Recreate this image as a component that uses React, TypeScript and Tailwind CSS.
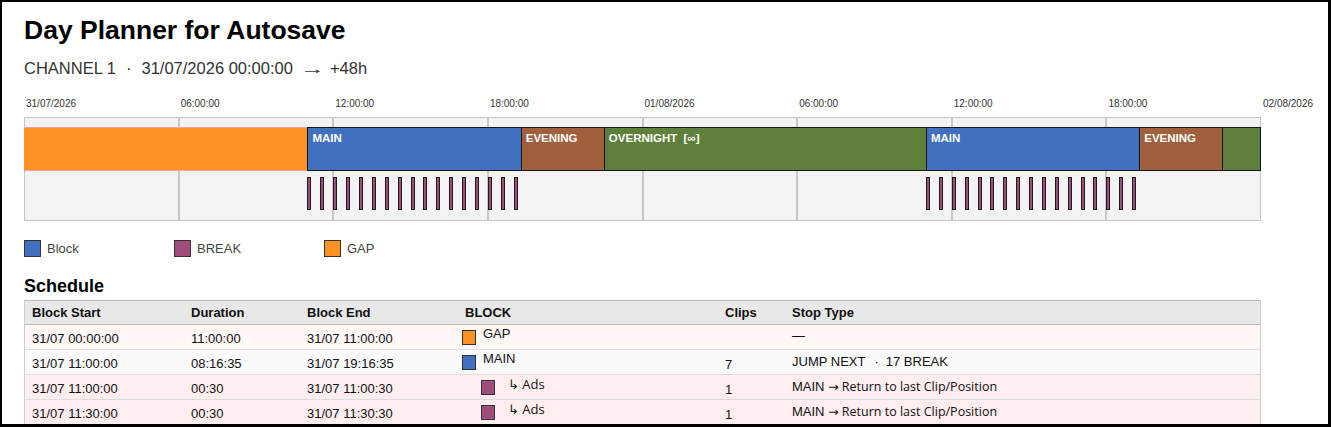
import React from 'react';

const HOUR = 1237 / 48;
const px = (h: number) => h * HOUR;

type Kind = 'gap' | 'main' | 'evening' | 'overnight';

const blocks: { start: number; end: number; label: string; kind: Kind }[] = [
  { start: 0, end: 11, label: '', kind: 'gap' },
  { start: 11, end: 19.2764, label: 'MAIN', kind: 'main' },
  { start: 19.2764, end: 22.5, label: 'EVENING', kind: 'evening' },
  { start: 22.5, end: 35, label: 'OVERNIGHT  [∞]', kind: 'overnight' },
  { start: 35, end: 43.2764, label: 'MAIN', kind: 'main' },
  { start: 43.2764, end: 46.5, label: 'EVENING', kind: 'evening' },
  { start: 46.5, end: 48, label: '', kind: 'overnight' },
];

const blockClass: Record<Kind, string> = {
  gap: 'bg-[#ff9222] border-y border-[#eaa6a6]',
  main: 'bg-[#4170c0] border border-[#151515]',
  evening: 'bg-[#a0603d] border border-[#151515]',
  overnight: 'bg-[#5f7f3c] border border-[#151515]',
};

const swatchClass: Record<string, string> = {
  gap: 'bg-[#ff9222]',
  main: 'bg-[#4170c0]',
  brk: 'bg-[#a04d7e]',
};

const ticks = [0, 6, 12, 18, 24, 30, 36, 42, 48];
const tickLabel = (h: number) =>
  h === 0 ? '31/07/2026' : h === 24 ? '01/08/2026' : h === 48 ? '02/08/2026' : `${String(h % 24).padStart(2, '0')}:00:00`;

// 17 breaks every 30 min inside each MAIN block
const breaks: number[] = [];
blocks
  .filter((b) => b.kind === 'main')
  .forEach((b) => {
    for (let i = 0; i < 17; i++) breaks.push(b.start + i * 0.5);
  });

const rows = [
  { start: '31/07 00:00:00', dur: '11:00:00', end: '31/07 11:00:00', kind: 'gap', name: 'GAP', clips: '', stop: 'dash', bg: 'bg-[#fff6f6]' },
  { start: '31/07 11:00:00', dur: '08:16:35', end: '31/07 19:16:35', kind: 'main', name: 'MAIN', clips: '7', stop: 'jump', bg: 'bg-[#fafafa]' },
  { start: '31/07 11:00:00', dur: '00:30', end: '31/07 11:00:30', kind: 'brk', name: 'Ads', clips: '1', stop: 'return', bg: 'bg-[#ffeef0]' },
  { start: '31/07 11:30:00', dur: '00:30', end: '31/07 11:30:30', kind: 'brk', name: 'Ads', clips: '1', stop: 'return', bg: 'bg-[#ffeef0]' },
  { start: '31/07 12:00:00', dur: '00:30', end: '31/07 12:00:30', kind: 'brk', name: 'Ads', clips: '1', stop: 'return', bg: 'bg-[#ffeef0]' },
  { start: '31/07 12:30:00', dur: '00:30', end: '31/07 12:30:30', kind: 'brk', name: 'Ads', clips: '1', stop: 'return', bg: 'bg-[#ffeef0]' },
];

const cols = 'grid grid-cols-[159px_116px_158px_260px_67px_1fr]';

const Timeline = () => (
  <div>
    {/* axis labels */}
    <div className="relative h-[20px] w-[1237px] text-[10px] leading-[12px] text-[#333]">
      {ticks.map((h) => (
        <span key={h} className="absolute top-[1px] whitespace-nowrap" style={{ left: px(h) + 2 }}>
          {tickLabel(h)}
        </span>
      ))}
    </div>

    <div className="relative h-[104px] w-[1237px] border border-[#c6c6c6] bg-[#f3f3f3]">
      {ticks.slice(1, -1).map((h) => (
        <div key={h} className="absolute top-0 bottom-0 w-[2px] bg-[#c8c8c8]" style={{ left: px(h) - 2 }} />
      ))}

      {/* blocks */}
      {blocks.map((b, i) => (
        <div
          key={i}
          className={`absolute top-[9px] h-[44px] overflow-hidden whitespace-pre px-[4px] pt-[4px] text-[11.5px] font-bold leading-[13px] text-white ${blockClass[b.kind]}`}
          style={{ left: px(b.start) - 1, width: px(b.end) - px(b.start) + (b.end === 48 ? 0 : 1) }}
        >
          {b.label}
        </div>
      ))}

      {/* breaks */}
      {breaks.map((t, i) => (
        <div
          key={i}
          className="absolute top-[59px] h-[33px] w-[4px] border border-[#1a1a1a] bg-[#a04d7e]"
          style={{ left: px(t) - 1 }}
        />
      ))}
    </div>
  </div>
);

const Legend = () => (
  <div className="mt-[19px] flex text-[13px] leading-[17px] text-[#444]">
    {[
      { label: 'Block', cls: 'bg-[#4170c0]' },
      { label: 'BREAK', cls: 'bg-[#a04d7e]' },
      { label: 'GAP', cls: 'bg-[#ff9222]' },
    ].map((l) => (
      <div key={l.label} className="flex w-[150px] items-center gap-[6px]">
        <span className={`h-[17px] w-[17px] border border-[#333] ${l.cls}`} />
        <span>{l.label}</span>
      </div>
    ))}
  </div>
);

const StopType = ({ stop }: { stop: string }) => {
  if (stop === 'dash') return <span>—</span>;
  if (stop === 'jump')
    return (
      <span>
        JUMP NEXT<span className="ml-[9px] mr-[7px]">·</span>17 BREAK
      </span>
    );
  return (
    <span>
      MAIN{' '}
      <span className="font-['Open_Sans','DejaVu_Sans',sans-serif] text-[12.5px]">→ Return to last Clip/Position</span>
    </span>
  );
};

const Schedule = () => (
  <div>
    <h2 className="mt-[19px] text-[18px] font-bold leading-[21px] text-black">Schedule</h2>
    <div className="mt-[3px] w-[1237px] border-x border-[#cfcfcf] text-[13px] leading-[15px] text-[#111]">
      <div className={`${cols} h-[25px] border-y border-[#b9b9b9] bg-[#e8e8e8] font-bold`}>
        {['Block Start', 'Duration', 'Block End', 'BLOCK', 'Clips', 'Stop Type'].map((h) => (
          <div key={h} className="px-[7px] pt-[4px]">
            {h}
          </div>
        ))}
      </div>
      {rows.map((r, i) => (
        <div key={i} className={`${cols} h-[25px] border-b border-[#dddddd] ${r.bg}`}>
          <div className="px-[7px] pt-[6px]">{r.start}</div>
          <div className="px-[7px] pt-[6px]">{r.dur}</div>
          <div className="px-[7px] pt-[6px]">{r.end}</div>
          <div className={`flex items-start ${r.kind === 'brk' ? 'pl-[23px]' : 'pl-[4px]'}`}>
            <span className={`mt-[5px] h-[15px] w-[14px] shrink-0 border border-[#333] ${swatchClass[r.kind]}`} />
            {r.kind === 'brk' ? (
              <span className="ml-[13px] mt-[1px] font-['Open_Sans','DejaVu_Sans',sans-serif] text-[13px] leading-[17px]">
                ↳ Ads
              </span>
            ) : (
              <span className="ml-[7px] mt-[1px]">{r.name}</span>
            )}
          </div>
          <div className="px-[7px] pt-[7px]">{r.clips}</div>
          <div className={`px-[7px] ${r.kind === 'gap' ? 'pt-[3px]' : 'pt-[4px]'}`}>
            <StopType stop={r.stop} />
          </div>
        </div>
      ))}
    </div>
  </div>
);

export default function App() {
  return (
    <div className="h-[427px] w-[1331px] overflow-hidden border-t-2 border-l-2 border-r-[3px] border-b-[3px] border-black bg-white font-['Liberation_Sans',Arial,sans-serif]">
      <div className="pl-[22px] pt-[13px]">
        <h1 className="text-[26.5px] font-bold leading-[30px] text-black">Day Planner for Autosave</h1>
        <div className="mt-[14px] h-[18px] overflow-visible whitespace-nowrap text-[16.5px] leading-[18px] text-[#333]">
          CHANNEL 1<span className="mx-[10px]">·</span>31/07/2026 00:00:00
          <span className="ml-[11px] mr-[10px] inline-block w-[16px] scale-x-[1.5] text-center">→</span>+48h
        </div>
        <div className="mt-[20px]">
          <Timeline />
        </div>
        <Legend />
        <Schedule />
      </div>
    </div>
  );
}
